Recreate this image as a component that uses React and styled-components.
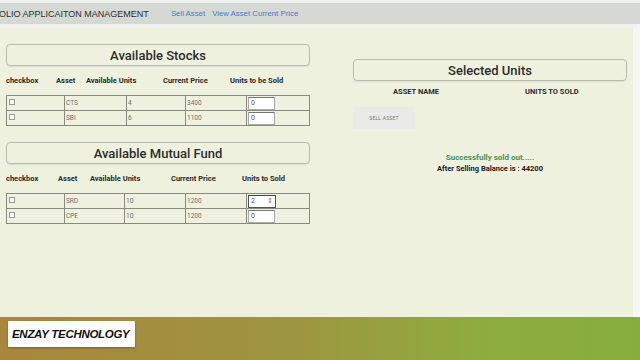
import React from "react";
import styled, { createGlobalStyle } from "styled-components";

const GlobalStyle = createGlobalStyle`
  html, body {
    margin: 0;
    padding: 0;
    width: 640px;
    height: 360px;
    overflow: hidden;
    font-family: Roboto, "Liberation Sans", sans-serif;
  }
`;

const stocks = [
  { asset: "CTS", units: 4, price: 3400, sold: "0" },
  { asset: "SBI", units: 6, price: 1100, sold: "0" },
];

const funds = [
  { asset: "SRD", units: 10, price: 1200, sold: "2", spin: true },
  { asset: "CPE", units: 10, price: 1200, sold: "0" },
];

const App = () => {
  return <>
    <GlobalStyle />
    <Page>
      <TopStrip />
      <NavBar>
        <Brand>OLIO APPLICAITON MANAGEMENT</Brand>
        <NavLink>Sell Asset</NavLink>
        <NavLink>View Asset Current Price</NavLink>
      </NavBar>
      <Spacer />
      <Main>
        <Content>
          <LeftCol>
            <TitleBox>Available Stocks</TitleBox>
            <HeadRow cols="50px 30px 77px 67px auto">
              <span>checkbox</span>
              <span>Asset</span>
              <span>Available Units</span>
              <span>Current Price</span>
              <span>Units to be Sold</span>
            </HeadRow>
            <AssetTable rows={stocks} cols={[58, 62, 59, 61]} />
            <TitleBox $top={16}>Available Mutual Fund</TitleBox>
            <HeadRow cols="52px 32px 81px 71px auto">
              <span>checkbox</span>
              <span>Asset</span>
              <span>Available Units</span>
              <span>Current Price</span>
              <span>Units to Sold</span>
            </HeadRow>
            <AssetTable rows={funds} cols={[58, 60, 61, 61]} />
          </LeftCol>
          <RightCol>
            <TitleBox>Selected Units</TitleBox>
            <SelHead>
              <span>ASSET NAME</span>
              <span>UNITS TO SOLD</span>
            </SelHead>
            <SellButton>SELL ASSET</SellButton>
            <Success>Successfully sold out.....</Success>
            <Balance>After Selling Balance is : 44200</Balance>
          </RightCol>
        </Content>
        <RightEdge />
      </Main>
      <Footer>
        <Label>ENZAY TECHNOLOGY</Label>
      </Footer>
    </Page>
  </>
}

const AssetTable = ({ rows, cols }) => (
  <Table>
    <colgroup>
      {cols.map((w, i) => <col key={i} style={{ width: w }} />)}
      <col />
    </colgroup>
    <tbody>
      {rows.map((r) => (
        <tr key={r.asset}>
          <td><Check /></td>
          <td>{r.asset}</td>
          <td>{r.units}</td>
          <td>{r.price}</td>
          <td>
            <UnitInput $wide={r.spin}>
              {r.sold}
              {r.spin && <Spin>⇕</Spin>}
            </UnitInput>
          </td>
        </tr>
      ))}
    </tbody>
  </Table>
);

const Page = styled.div`
  display: flex;
  flex-direction: column;
  width: 640px;
  height: 360px;
  background: #f2f3f0;
`;

const TopStrip = styled.div`
  height: 3px;
  background: #eef0ee;
`;

const NavBar = styled.div`
  height: 21px;
  background: #d5d9d4;
  display: flex;
  align-items: center;
  gap: 7px;
`;

const Brand = styled.span`
  font-family: "Liberation Sans", Arial, sans-serif;
  font-size: 9px;
  color: #2e2e2e;
  margin-right: 15px;
  margin-left: -1px;
`;

const NavLink = styled.span`
  font-family: "Liberation Sans", Arial, sans-serif;
  font-size: 7.8px;
  color: #4a78d0;
`;

const Spacer = styled.div`
  height: 4px;
`;

const Main = styled.div`
  display: flex;
  height: 289px;
`;

const Content = styled.div`
  width: 633px;
  background: #eef1de;
  display: flex;
  padding: 16px 0 0 6px;
  box-sizing: border-box;
  gap: 43px;
`;

const RightEdge = styled.div`
  flex: 1;
  background: #f7f8f3;
`;

const LeftCol = styled.div`
  width: 304px;
  display: flex;
  flex-direction: column;
`;

const RightCol = styled.div`
  width: 274px;
  margin-top: 15px;
  display: flex;
  flex-direction: column;
`;

const TitleBox = styled.div`
  height: 22px;
  margin-top: ${p => p.$top || 0}px;
  box-sizing: border-box;
  border: 1px solid #b9bbb0;
  border-radius: 4px;
  box-shadow: 0 1px 1px rgba(0,0,0,0.08);
  display: flex;
  align-items: center;
  justify-content: center;
  font-size: 13px;
  font-weight: 500;
  color: #2c2c2c;
`;

const HeadRow = styled.div`
  display: grid;
  grid-template-columns: ${p => p.cols};
  margin-top: 8px;
  height: 12px;
  align-items: center;
  font-size: 7.5px;
  font-weight: 700;
  color: #2a2a2a;
  margin-bottom: 9px;
`;

const Table = styled.table`
  width: 304px;
  border-collapse: collapse;
  border: 1px solid #707070;
  table-layout: fixed;
  td {
    border: 1px solid #8a8a80;
    height: 14px;
    padding: 0 0 0 1px;
    font-size: 6.5px;
    color: #707070;
    vertical-align: middle;
  }
`;

const Check = styled.span`
  display: inline-block;
  width: 4px;
  height: 4px;
  border: 1px solid #999;
  background: #fff;
  margin-left: 1px;
`;

const UnitInput = styled.div`
  width: ${p => p.$wide ? 28 : 27}px;
  height: 13px;
  box-sizing: border-box;
  background: #fff;
  border: 1px solid ${p => p.$wide ? "#555" : "#aaa"};
  border-top-color: ${p => p.$wide ? "#444" : "#777"};
  display: flex;
  align-items: center;
  justify-content: space-between;
  padding: 0 2px;
  font-size: 7px;
  color: #555;
`;

const Spin = styled.span`
  font-size: 7px;
  color: #777;
`;

const SelHead = styled.div`
  display: flex;
  margin-top: 6px;
  padding-left: 40px;
  gap: 86px;
  font-size: 7.5px;
  font-weight: 700;
  color: #2a2a2a;
`;

const SellButton = styled.div`
  margin-top: 11px;
  width: 62px;
  height: 22px;
  background: #eaebe8;
  border-radius: 2px;
  display: flex;
  align-items: center;
  justify-content: center;
  font-size: 5px;
  color: #777;
  letter-spacing: 0.2px;
`;

const Success = styled.div`
  margin-top: 24px;
  text-align: center;
  font-size: 8px;
  font-weight: 700;
  color: #3f9456;
`;

const Balance = styled.div`
  margin-top: 2px;
  text-align: center;
  font-size: 7.5px;
  font-weight: 700;
  color: #1a1a1a;
`;

const Footer = styled.div`
  height: 43px;
  background: linear-gradient(90deg, #a8873b 0%, #9e9540 45%, #8eac3e 75%, #87ae3d 100%);
  padding: 4px 0 0 8px;
  box-sizing: border-box;
`;

const Label = styled.div`
  width: 127px;
  height: 26px;
  background: #fff;
  display: flex;
  align-items: center;
  padding-left: 4px;
  box-sizing: border-box;
  font-family: "Liberation Sans", Arial, sans-serif;
  font-size: 11.5px;
  font-weight: 900;
  font-style: italic;
  color: #111;
  letter-spacing: -0.3px;
  box-shadow: 0 1px 2px rgba(0,0,0,0.3);
`;

export default App;
